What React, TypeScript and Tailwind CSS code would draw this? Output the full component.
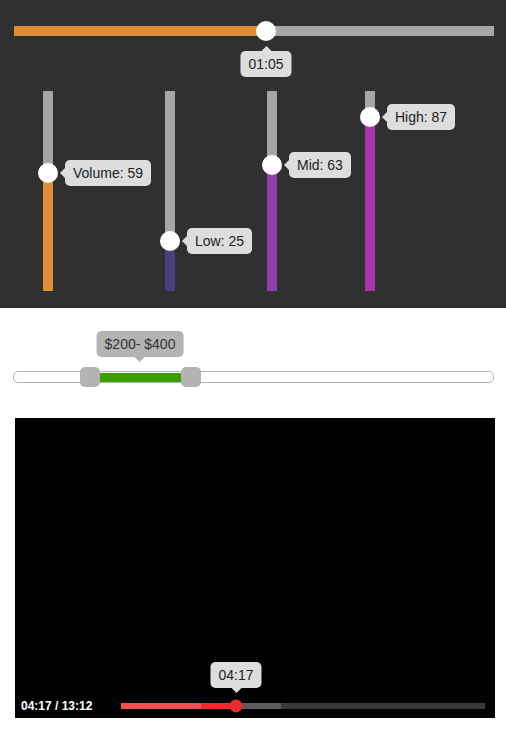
import type { CSSProperties } from 'react'

const font: CSSProperties = { fontFamily: '"Liberation Sans", Arial, sans-serif' }

interface VSliderProps {
  value: number
  color: string
  label: string
  offset: string
}

function VSlider({ value, color, label, offset }: VSliderProps) {
  return (
    <div className={`relative h-[200px] w-[10px] shrink-0 bg-[#a6a6a6] ${offset}`}>
      <div className="absolute bottom-0 left-0 w-full" style={{ height: `${value}%`, background: color }} />
      <div
        className="absolute left-1/2 h-[20px] w-[20px] -translate-x-1/2 translate-y-1/2 rounded-full bg-white"
        style={{ bottom: `${value}%` }}
      />
      <div className="absolute left-[17px] flex translate-y-1/2 items-center" style={{ bottom: `${value}%` }}>
        <span className="h-0 w-0 border-y-[5px] border-r-[5px] border-y-transparent border-r-[#dddddd]" />
        <span className="h-[26px] whitespace-nowrap rounded-[5px] bg-[#dddddd] px-2 text-[14px] leading-[26px] text-[#222]">
          {label}
        </span>
      </div>
    </div>
  )
}

export default function App() {
  return (
    <div className="w-[506px] bg-white" style={font}>
      {/* player controls */}
      <section className="h-[308px] bg-[#303030] px-[14px] pt-[26px]">
        <div className="relative h-[10px] w-[480px] bg-[#a6a6a6]">
          <div className="h-full w-[52.5%] bg-[#df8d35]" />
          <div className="absolute left-[52.5%] top-1/2 h-[20px] w-[20px] -translate-x-1/2 -translate-y-1/2 rounded-full bg-white" />
          <div className="absolute left-[52.5%] top-[20px] flex -translate-x-1/2 flex-col items-center">
            <span className="h-0 w-0 border-x-[5px] border-b-[5px] border-x-transparent border-b-[#dddddd]" />
            <span className="h-[26px] rounded-[5px] bg-[#dddddd] px-2 text-[14px] leading-[26px] text-[#222]">01:05</span>
          </div>
        </div>

        <div className="mt-[55px] flex">
          <VSlider value={59} color="#df8d35" label="Volume: 59" offset="ml-[29px]" />
          <VSlider value={25} color="#4a3f7c" label="Low: 25" offset="ml-[112px]" />
          <VSlider value={63} color="#8e3fa9" label="Mid: 63" offset="ml-[92px]" />
          <VSlider value={87} color="#aa35aa" label="High: 87" offset="ml-[88px]" />
        </div>
      </section>

      {/* price range */}
      <section className="px-[13px] pt-[63px]">
        <div className="relative h-[12px] w-[481px] rounded-[5px] border border-[#b3b3b3] bg-white">
          <div className="absolute left-[86px] top-[1px] h-[9px] w-[81px] bg-[#3a9d00]" />
          <div className="absolute left-[66px] top-[-5px] h-[20px] w-[20px] rounded-[5px] bg-[#b3b3b3]" />
          <div className="absolute left-[167px] top-[-5px] h-[20px] w-[20px] rounded-[5px] bg-[#b3b3b3]" />
          <div className="absolute bottom-[20px] left-[126px] flex -translate-x-1/2 flex-col items-center">
            <span className="h-[26px] whitespace-nowrap rounded-[5px] bg-[#b3b3b3] px-2 text-[14px] leading-[26px] text-[#333]">
              $200- $400
            </span>
            <span className="h-0 w-0 border-x-[5px] border-t-[5px] border-x-transparent border-t-[#b3b3b3]" />
          </div>
        </div>
      </section>

      {/* video */}
      <section className="px-[15px] pb-[31px] pt-[35px]">
        <div className="relative h-[300px] w-[480px] bg-black">
          <div className="absolute inset-x-0 bottom-0 flex h-[24px] items-center pl-[6px] pr-[10px]">
            <span className="w-[100px] shrink-0 text-[12px] font-bold text-white">04:17 / 13:12</span>
            <div className="relative flex h-[6px] flex-1 bg-[#383838]">
              <div className="h-full w-[80px] bg-[#f25252]" />
              <div className="h-full w-[35px] bg-[#ee2a2a]" />
              <div className="h-full w-[45px] bg-[#5c5c5c]" />
              <div className="absolute left-[115px] top-1/2 h-[13px] w-[13px] -translate-x-1/2 -translate-y-1/2 rounded-full bg-[#ee2a2a]" />
              <div className="absolute bottom-[16px] left-[115px] flex -translate-x-1/2 flex-col items-center">
                <span className="h-[26px] rounded-[5px] bg-[#dddddd] px-2 text-[14px] leading-[26px] text-[#222]">04:17</span>
                <span className="h-0 w-0 border-x-[5px] border-t-[5px] border-x-transparent border-t-[#dddddd]" />
              </div>
            </div>
          </div>
        </div>
      </section>
    </div>
  )
}
